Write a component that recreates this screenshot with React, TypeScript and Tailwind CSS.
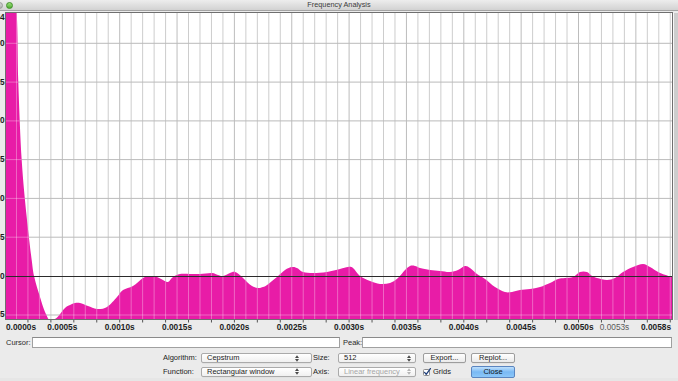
import React from "react";

const X0 = 5;
const X1 = 672;
const Y0 = 13;
const Y1 = 319.5;
const PX = 11.47; // pixels per 0.0001 s

const PTS: [number, number][] = [
  [5, -120], [11, -40], [16.7, 13], [18.3, 82], [21.7, 160], [26.7, 217], [31.7, 260],
  [34.3, 277], [40, 297], [45, 312], [50, 321], [54, 319.5], [58, 316.5], [65, 308],
  [70, 305], [75, 303], [80, 303], [88, 306], [97, 309], [107, 307], [117, 297],
  [123, 290], [133, 286], [143, 278], [150, 276], [157, 277], [163, 280], [168, 282],
  [173, 277], [180, 274], [190, 274], [200, 274], [212, 273], [218, 275], [223, 276],
  [230, 273], [235, 272], [241, 276], [247, 282], [252, 286], [258, 288], [263, 287],
  [267, 285], [277, 277], [285, 270], [292, 267], [297, 268], [303, 272], [313, 273],
  [327, 272], [340, 269], [348, 267], [353, 268], [360, 276], [370, 281], [380, 284],
  [390, 283], [398, 278], [405, 270], [410, 266], [415, 266], [420, 268], [430, 270],
  [440, 271], [450, 272], [458, 270], [465, 266], [470, 268], [477, 274], [485, 279],
  [495, 287], [505, 292], [512, 292], [520, 290], [530, 289], [540, 287], [550, 283],
  [558, 279], [565, 278], [573, 277], [580, 272], [587, 272], [592, 276], [597, 278],
  [607, 280], [615, 278], [623, 272], [633, 267], [643, 264], [650, 267], [660, 273],
  [672, 277],
];

function segments(pts: [number, number][]) {
  let d = "";
  for (let i = 0; i < pts.length - 1; i++) {
    const p0 = pts[i - 1] || pts[i];
    const p1 = pts[i];
    const p2 = pts[i + 1];
    const p3 = pts[i + 2] || p2;
    const c1x = p1[0] + (p2[0] - p0[0]) / 6;
    const c1y = p1[1] + (p2[1] - p0[1]) / 6;
    const c2x = p2[0] - (p3[0] - p1[0]) / 6;
    const c2y = p2[1] - (p3[1] - p1[1]) / 6;
    d += ` C ${c1x.toFixed(2)} ${c1y.toFixed(2)} ${c2x.toFixed(2)} ${c2y.toFixed(2)} ${p2[0]} ${p2[1]}`;
  }
  return d;
}

const FILL = `M 5 330 L ${PTS[0][0]} ${PTS[0][1]}${segments(PTS)} L 672 330 Z`;

const VX: number[] = [];
for (let k = 1; k <= 58; k++) VX.push(X0 + k * PX);
const HY = [43.3, 82.1, 120.9, 159.6, 198.4, 237.2, 315];

const YLABELS = [
  { y: 17, t: "34" },
  { y: 43, t: "30" },
  { y: 82, t: "25" },
  { y: 120.5, t: "20" },
  { y: 159, t: "15" },
  { y: 198, t: "10" },
  { y: 237, t: "5" },
  { y: 276, t: "0" },
  { y: 314, t: "-5" },
];

const XLABELS = [
  "0.0005s", "0.0010s", "0.0015s", "0.0020s", "0.0025s", "0.0030s", "0.0035s",
  "0.0040s", "0.0045s", "0.0050s",
];

function Chart() {
  return (
    <svg width={673} height={322} viewBox="0 11 673 322" className="block shrink-0">
      <defs>
        <clipPath id="plotclip">
          <rect x={X0} y={Y0} width={X1 - X0} height={Y1 - Y0} />
        </clipPath>
        <clipPath id="fillclip">
          <path d={FILL} />
        </clipPath>
      </defs>
      <rect x={X0} y={Y0} width={X1 - X0} height={Y1 - Y0} fill="#ffffff" />
      <g clipPath="url(#plotclip)">
        {VX.map((x, i) => (
          <line key={"v" + i} x1={x} x2={x} y1={Y0} y2={Y1} stroke={i % 5 === 4 ? "#bdbdbd" : "#cdcdcd"} strokeWidth={1} />
        ))}
        {HY.map((y, i) => (
          <line key={"h" + i} x1={X0} x2={X1} y1={y} y2={y} stroke="#bbbbbb" strokeWidth={1} />
        ))}
        <path d={FILL} fill="#e81ca7" />
        <g clipPath="url(#fillclip)">
          {VX.map((x, i) => (
            <line key={"vw" + i} x1={x} x2={x} y1={Y0} y2={Y1} stroke="#ffffff" strokeOpacity={0.33} strokeWidth={1} />
          ))}
          {HY.map((y, i) => (
            <line key={"hw" + i} x1={X0} x2={X1} y1={y} y2={y} stroke="#ffffff" strokeOpacity={0.33} strokeWidth={1} />
          ))}
        </g>
        <line x1={X0} x2={X1} y1={276.5} y2={276.5} stroke="#2b2b2b" strokeWidth={1} />
      </g>
      <rect x={X0 + 0.5} y={Y0 - 0.5} width={X1 - X0} height={Y1 - Y0 + 0.5} fill="none" stroke="#6f6f6f" strokeWidth={1} />
      {VX.filter((_, i) => i % 2 === 1).map((x, i) => (
        <line key={"t" + i} x1={x} x2={x} y1={320} y2={322.5} stroke="#555555" strokeWidth={1} />
      ))}
      <g fontFamily="'Liberation Sans', Arial, sans-serif" fontWeight={700} fontSize={8.3} fill="#1e1e1e">
        {YLABELS.map((l, i) => (
          <text key={"yl" + i} x={4.6} y={l.y} dy="0.35em" textAnchor="end">
            {l.t}
          </text>
        ))}
        <text x={6} y={329.5} textAnchor="start">0.0000s</text>
        {XLABELS.map((t, i) => (
          <text key={"xl" + i} x={X0 + (i + 1) * 5 * PX} y={329.5} textAnchor="middle">
            {t}
          </text>
        ))}
        <text x={671} y={329.5} textAnchor="end">0.0058s</text>
      </g>
      <text
        x={614.5}
        y={329.5}
        textAnchor="middle"
        fontFamily="'Liberation Sans', Arial, sans-serif"
        fontSize={8.3}
        fill="#5a5a5a"
      >
        0.0053s
      </text>
    </svg>
  );
}

function Arrows({ light }: { light?: boolean }) {
  const c = light ? "#b5b5b5" : "#4a4a4a";
  return (
    <svg width={4} height={7} viewBox="0 0 4 7" className="shrink-0">
      <path d="M0 3 L2 0.3 L4 3 Z" fill={c} />
      <path d="M0 4 L2 6.7 L4 4 Z" fill={c} />
    </svg>
  );
}

function Select({ label, disabled, pr }: { label: string; disabled?: boolean; pr: string }) {
  return (
    <div
      className={
        "h-[10px] w-full flex items-center justify-between pl-[5px] rounded-[2px] border border-[#aaaaaa] bg-gradient-to-b from-white to-[#f0f0f0] shadow-[0_0.5px_0_rgba(0,0,0,0.08)] " +
        pr
      }
    >
      <span className={"leading-none " + (disabled ? "text-[#a6a6a6]" : "text-[#1c1c1c]")}>{label}</span>
      <Arrows light={disabled} />
    </div>
  );
}

function Button({ label }: { label: string }) {
  return (
    <div className="h-[10px] w-full flex items-center justify-center rounded-[2px] border border-[#9d9d9d] bg-gradient-to-b from-white to-[#ebebeb] shadow-[0_0.5px_0_rgba(0,0,0,0.08)]">
      <span className="leading-none text-[#1c1c1c]">{label}</span>
    </div>
  );
}

export default function App() {
  return (
    <div className="w-[678px] h-[381px] overflow-hidden bg-[#ebebeb] flex flex-col font-['Liberation_Sans',Arial,sans-serif] text-[#1c1c1c]">
      {/* title bar */}
      <div className="h-[11px] shrink-0 grid grid-cols-[1fr_auto_1fr] items-center bg-gradient-to-b from-[#ededed] to-[#d2d2d2] border-b border-[#a4a4a4]">
        <div className="flex items-center gap-[3px]">
          <div className="ml-[-4px] w-[7px] h-[7px] rounded-full bg-gradient-to-b from-[#d6d6d6] to-[#b3b3b3] border border-[#9a9a9a]" />
          <div className="w-[7px] h-[7px] rounded-full bg-gradient-to-b from-[#9be07a] to-[#4fae2f] border border-[#3f8f27]" />
        </div>
        <span className="text-[7.3px] leading-none text-[#3b3b3b]">Frequency Analysis</span>
        <div />
      </div>

      {/* chart */}
      <div className="flex shrink-0">
        <Chart />
        <div className="mt-[2px] h-[307px] w-[5px] border-l border-[#f7f7f7] bg-[#cdcdcd]" />
      </div>

      {/* cursor / peak */}
      <div className="h-[19px] shrink-0 flex items-center pl-[6px] pr-[6px] text-[7.5px]">
        <span className="w-[26px] leading-none text-[#2a2a2a]">Cursor:</span>
        <div className="w-[308px] h-[11px] bg-white border border-[#a0a0a0] border-t-[#8a8a8a]" />
        <span className="ml-[3px] w-[19px] leading-none text-[#2a2a2a]">Peak:</span>
        <div className="flex-1 h-[11px] bg-white border border-[#a0a0a0] border-t-[#8a8a8a]" />
      </div>

      {/* controls */}
      <div className="h-[26px] shrink-0 pl-[163px] text-[7.5px]">
        <div className="grid grid-cols-[38px_111px_26px_78px_50px_49px] grid-rows-[12px_13px] gap-y-[1px] items-center">
          <span className="leading-none">Algorithm:</span>
          <Select label="Cepstrum" pr="pr-[12px]" />
          <span className="pl-[1px] leading-none">Size:</span>
          <Select label="512" pr="pr-[4px]" />
          <div className="justify-self-end w-[43px]">
            <Button label="Export..." />
          </div>
          <div className="justify-self-end w-[44px]">
            <Button label="Replot..." />
          </div>

          <span className="leading-none">Function:</span>
          <Select label="Rectangular window" pr="pr-[12px]" />
          <span className="pl-[1px] leading-none">Axis:</span>
          <Select label="Linear frequency" disabled pr="pr-[4px]" />
          <div className="justify-self-end w-[43px] flex items-center gap-[2px]">
            <svg width={8} height={8} viewBox="0 0 8 8" className="shrink-0">
              <rect x={0.5} y={1.5} width={6} height={6} rx={1} fill="#ffffff" stroke="#8c8c8c" />
              <path d="M1.6 4.4 L3.2 6.3 L7.4 0.6" fill="none" stroke="#1f3f7a" strokeWidth={1.3} strokeLinecap="round" strokeLinejoin="round" />
            </svg>
            <span className="leading-none">Grids</span>
          </div>
          <div className="justify-self-end w-[44px] h-[12px] flex items-center justify-center rounded-[2px] border border-[#5a85c0] bg-gradient-to-b from-[#bfe0fc] via-[#79b9f4] to-[#8cc7f9]">
            <span className="leading-none text-[#101820]">Close</span>
          </div>
        </div>
      </div>
      <div className="flex-1 bg-[#e6e6e6]" />
    </div>
  );
}
